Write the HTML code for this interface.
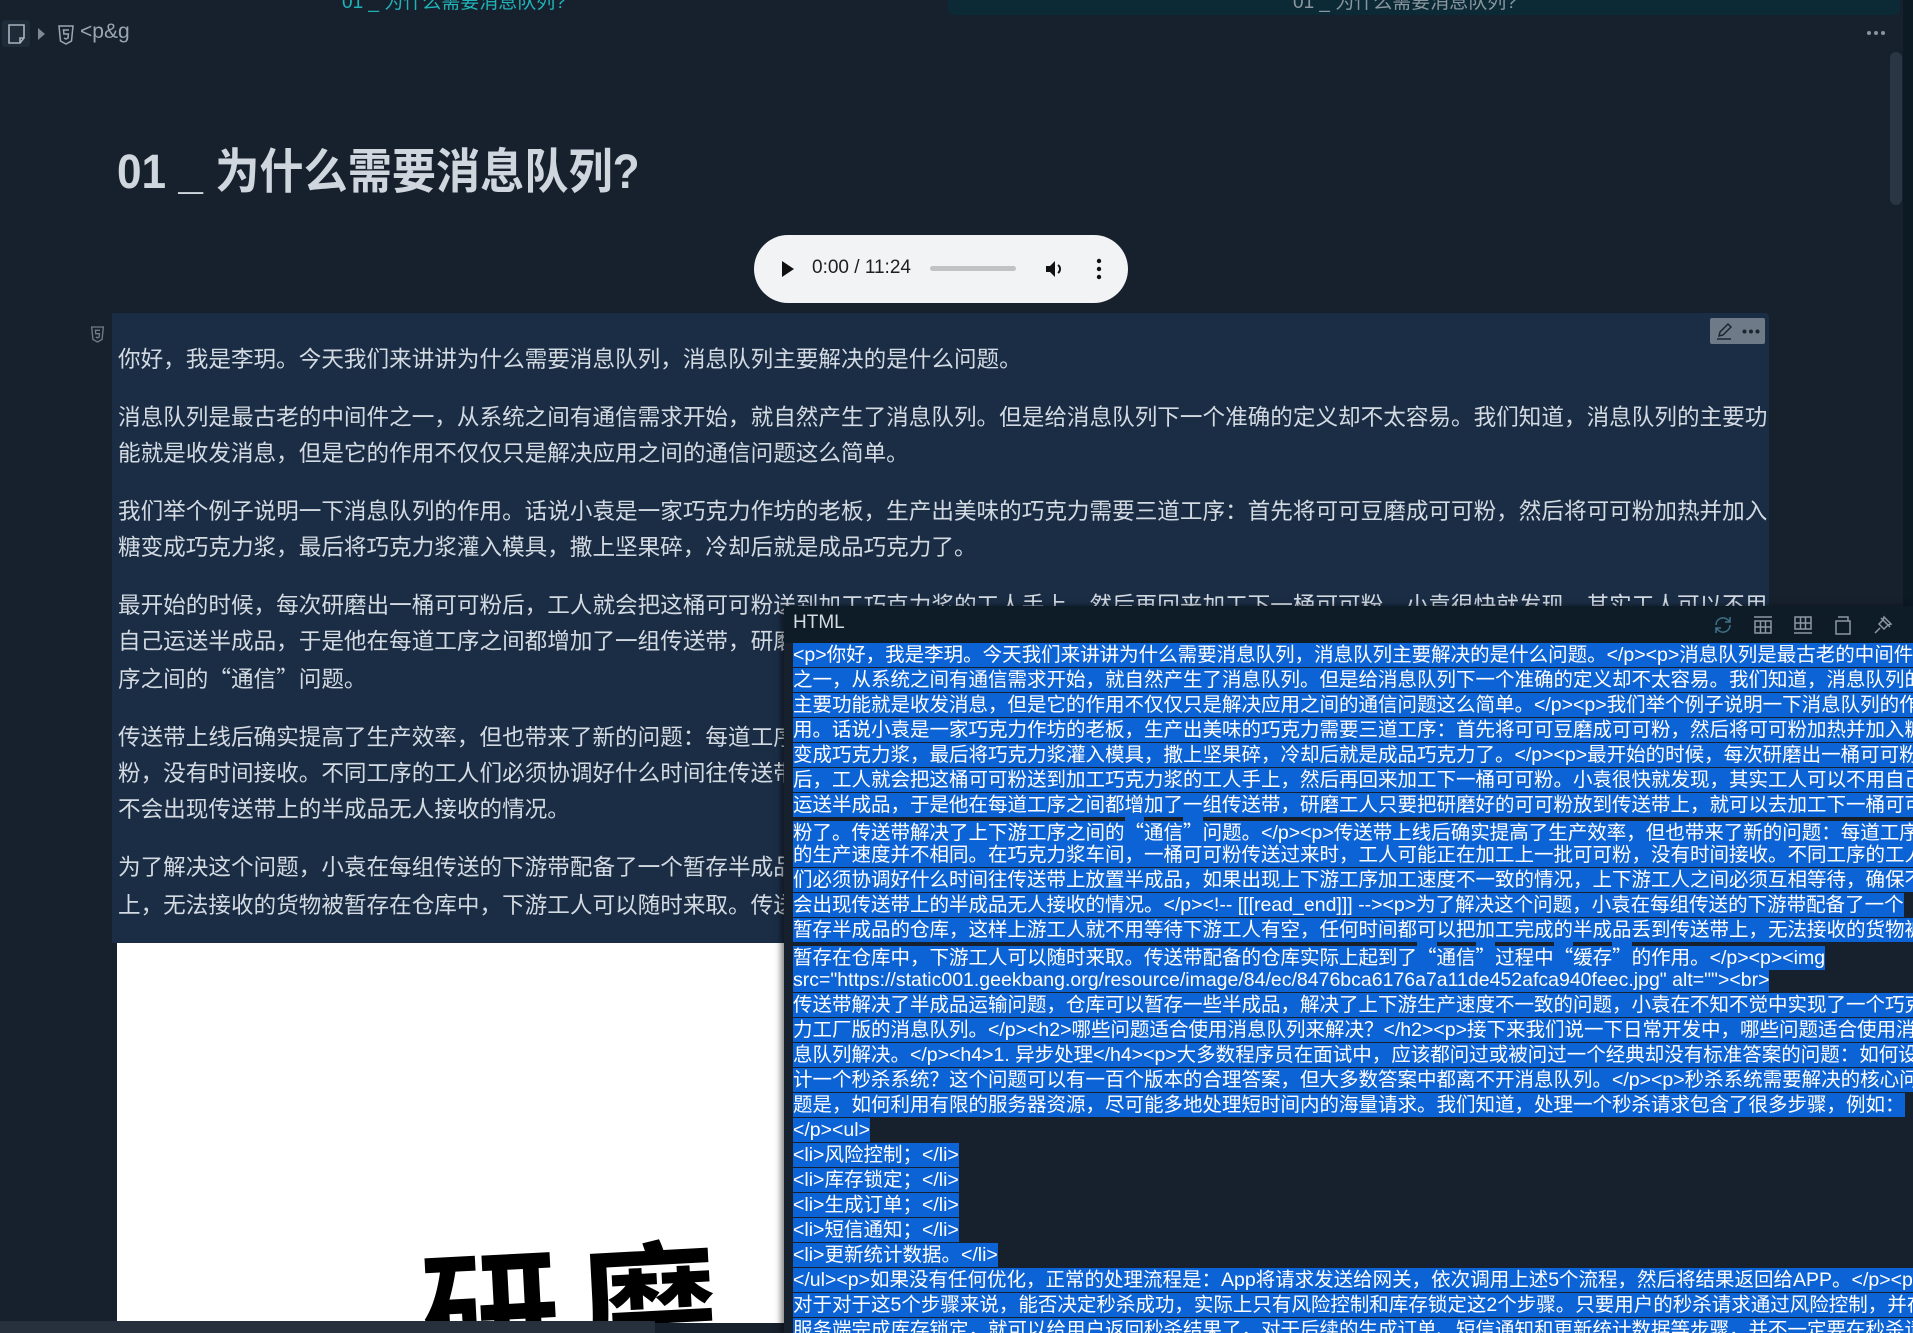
<!DOCTYPE html>
<html><head><meta charset="utf-8">
<style>
*{margin:0;padding:0;box-sizing:border-box}
html,body{width:1913px;height:1333px;overflow:hidden;background:#17212d;font-family:"Liberation Sans","Noto Sans CJK SC",sans-serif;position:relative}
.abs{position:absolute}
.q{font-family:"Noto Sans CJK SC",sans-serif}
.tab1{left:342px;top:-13px;color:#1fb3b8;font-size:19px;white-space:nowrap}
.tab2{left:948px;top:0;width:952px;height:15px;background:#0c2a35;border-radius:0 0 6px 6px;overflow:hidden}
.tab2 span{position:absolute;left:345px;top:-13px;color:#8a969f;font-size:19px;white-space:nowrap}
.rstrip{left:1903px;top:0;width:10px;height:1333px;background:#0c1a24}
.vscroll{left:1890px;top:52px;width:12px;height:153px;background:#2a3644;border-radius:6px}
.crumb{left:80px;top:20px;color:#9aa6b3;font-size:21px}
.title{left:117px;top:132px;font-size:48px;font-weight:bold;color:#cfd6de;white-space:nowrap;transform:scaleX(0.92);transform-origin:left center}
.audio{left:754px;top:235px;width:374px;height:68px;background:#f1f3f4;border-radius:34px}
.block{left:112px;top:313px;width:1657px;height:630px;background:#1b2d45;border-radius:0 4px 0 0;overflow:hidden}
.block p{font-size:22.6px;line-height:36px;color:#d3dae2;margin:0 0 22px 6px;white-space:nowrap}
.edit{left:1710px;top:318px;width:55px;height:26px;background:#6e7a88;border-radius:2px}
.img{left:117px;top:943px;width:667px;height:380px;background:#fff;overflow:hidden}
.img span{position:absolute;left:304px;top:258px;font-size:138px;font-weight:bold;color:#000;white-space:nowrap;letter-spacing:20px;transform:rotate(-3deg)}
.hscroll{left:0;top:1321px;width:655px;height:12px;background:#27313d}
.panel{left:784px;top:606px;width:1129px;height:727px;background:#17212d;box-shadow:-3px 0 6px rgba(0,0,0,.5);overflow:hidden}
.phead{position:absolute;left:0;top:0;width:100%;height:37px;background:#0d1c27}
.phead .t{position:absolute;left:9px;top:6px;color:#d5dbe1;font-size:19px}
.code{position:absolute;left:9px;top:37px;width:1125px;font-size:19.5px;line-height:25px;color:#fff;white-space:nowrap}
.code div{height:25px;overflow:visible}
.code span{background:#0c63d6;padding:1px 0 1px 0}
.code span .q{padding:0}
</style></head><body>
<div class="abs tab1">01 _ 为什么需要消息队列?</div>
<div class="abs tab2"><span>01 _ 为什么需要消息队列?</span></div>
<div class="abs rstrip"></div>
<div class="abs vscroll"></div>
<div class="abs" style="left:2px;top:20px;width:28px;height:27px;background:#1f2b38;border-radius:3px"></div>
<svg class="abs" style="left:6px;top:23px" width="22" height="22" viewBox="0 0 22 22"><path d="M3 2h15v13l-4 5H3z M14 20v-5h4" fill="none" stroke="#aab3bd" stroke-width="1.6"/></svg>
<svg class="abs" style="left:37px;top:27px" width="10" height="14" viewBox="0 0 10 14"><path d="M1 1l7 6-7 6z" fill="#7d8893"/></svg>
<svg class="abs" style="left:57px;top:25px" width="18" height="20" viewBox="0 0 18 20"><path d="M2 1h14l-1.5 15L9 19l-5.5-3z" fill="none" stroke="#9aa6b3" stroke-width="1.5"/><path d="M12 5H6.5l.4 4h4.5l-.4 4L9 14l-2-1" fill="none" stroke="#9aa6b3" stroke-width="1.5"/></svg>
<div class="abs crumb">&lt;p&amp;g</div>
<svg class="abs" style="left:1866px;top:29px" width="20" height="8"><circle cx="3" cy="4" r="2" fill="#8a949e"/><circle cx="10" cy="4" r="2" fill="#8a949e"/><circle cx="17" cy="4" r="2" fill="#8a949e"/></svg>

<div class="abs title">01 _ 为什么需要消息队列?</div>

<div class="abs audio">
<svg class="abs" style="left:27px;top:25px" width="14" height="18"><path d="M1 1l12 8-12 8z" fill="#111"/></svg>
<div class="abs" style="left:58px;top:22px;font-size:19px;color:#1f1f1f;white-space:nowrap">0:00 / 11:24</div>
<div class="abs" style="left:176px;top:31px;width:86px;height:5px;background:#c2c2c2;border-radius:3px"></div>
<svg class="abs" style="left:290px;top:23px" width="22" height="22" viewBox="0 0 22 22"><path d="M2 8h4l5-5v16l-5-5H2z" fill="#111"/><path d="M14 7a5 5 0 0 1 0 8" fill="none" stroke="#111" stroke-width="2"/></svg>
<svg class="abs" style="left:342px;top:23px" width="6" height="22"><circle cx="3" cy="3" r="2.2" fill="#111"/><circle cx="3" cy="11" r="2.2" fill="#111"/><circle cx="3" cy="19" r="2.2" fill="#111"/></svg>
</div>

<svg class="abs" style="left:90px;top:326px" width="15" height="17" viewBox="0 0 18 20"><path d="M2 1h14l-1.5 15L9 19l-5.5-3z" fill="none" stroke="#6f7c89" stroke-width="1.6"/><path d="M12 5H6.5l.4 4h4.5l-.4 4L9 14l-2-1" fill="none" stroke="#6f7c89" stroke-width="1.6"/></svg>

<div class="abs block">
<div style="height:29px"></div>
<p>你好，我是李玥。今天我们来讲讲为什么需要消息队列，消息队列主要解决的是什么问题。</p>
<p>消息队列是最古老的中间件之一，从系统之间有通信需求开始，就自然产生了消息队列。但是给消息队列下一个准确的定义却不太容易。我们知道，消息队列的主要功<br>能就是收发消息，但是它的作用不仅仅只是解决应用之间的通信问题这么简单。</p>
<p>我们举个例子说明一下消息队列的作用。话说小袁是一家巧克力作坊的老板，生产出美味的巧克力需要三道工序：首先将可可豆磨成可可粉，然后将可可粉加热并加入<br>糖变成巧克力浆，最后将巧克力浆灌入模具，撒上坚果碎，冷却后就是成品巧克力了。</p>
<p>最开始的时候，每次研磨出一桶可可粉后，工人就会把这桶可可粉送到加工巧克力浆的工人手上，然后再回来加工下一桶可可粉。小袁很快就发现，其实工人可以不用<br>自己运送半成品，于是他在每道工序之间都增加了一组传送带，研磨工人只要把研磨好的可可粉放到传送带上，就可以去加工下一桶可可粉了。传送带解决了上下游工<br>序之间的<span class="q">“</span>通信<span class="q">”</span>问题。</p>
<p>传送带上线后确实提高了生产效率，但也带来了新的问题：每道工序的生产速度并不相同。在巧克力浆车间，一桶可可粉传送过来时，工人可能正在加工上一批可可<br>粉，没有时间接收。不同工序的工人们必须协调好什么时间往传送带上放置半成品，如果出现上下游工序加工速度不一致的情况，上下游工人之间必须互相等待，确保<br>不会出现传送带上的半成品无人接收的情况。</p>
<p>为了解决这个问题，小袁在每组传送的下游带配备了一个暂存半成品的仓库，这样上游工人就不用等待下游工人有空，任何时间都可以把加工完成的半成品丢到传送带<br>上，无法接收的货物被暂存在仓库中，下游工人可以随时来取。传送带配备的仓库实际上起到了<span class="q">“</span>通信<span class="q">”</span>过程中<span class="q">“</span>缓存<span class="q">”</span>的作用。</p>
</div>
<div class="abs edit">
<svg class="abs" style="left:5px;top:3px" width="20" height="20" viewBox="0 0 20 20"><path d="M4 15l1-4 8-8 3 3-8 8z M2 18h14" fill="none" stroke="#1d2630" stroke-width="1.5"/></svg>
<svg class="abs" style="left:32px;top:11px" width="18" height="5"><circle cx="2.5" cy="2.5" r="2" fill="#1d2630"/><circle cx="9" cy="2.5" r="2" fill="#1d2630"/><circle cx="15.5" cy="2.5" r="2" fill="#1d2630"/></svg>
</div>

<div class="abs img"><span>研磨</span></div>
<div class="abs hscroll"></div>

<div class="abs panel">
<div class="phead"><div class="t">HTML</div>
<svg class="abs" style="left:928px;top:8px" width="22" height="22" viewBox="0 0 22 22"><path d="M4 11a7 7 0 0 1 12-5l2 2 M18 11a7 7 0 0 1-12 5l-2-2 M18 3v5h-5 M4 19v-5h5" fill="none" stroke="#3f6f85" stroke-width="1.6"/></svg>
<svg class="abs" style="left:968px;top:8px" width="22" height="22" viewBox="0 0 22 22"><path d="M2 3h18 M3 7h16v12H3z M3 13h16 M8.5 7v12 M13.5 7v12" fill="none" stroke="#8d98a3" stroke-width="1.5"/></svg>
<svg class="abs" style="left:1008px;top:8px" width="22" height="22" viewBox="0 0 22 22"><path d="M3 3h16v12H3z M3 9h16 M8.5 3v12 M13.5 3v12 M2 19h18" fill="none" stroke="#8d98a3" stroke-width="1.5"/></svg>
<svg class="abs" style="left:1048px;top:8px" width="22" height="22" viewBox="0 0 22 22"><path d="M4 7h14v13H4z M6 3h10v4" fill="none" stroke="#8d98a3" stroke-width="1.5"/></svg>
<svg class="abs" style="left:1088px;top:8px" width="22" height="22" viewBox="0 0 22 22"><path d="M9 4l9 9 M12 3l7 7-3 1-4 4-5-5 4-4z M8 14l-5 5" fill="none" stroke="#8d98a3" stroke-width="1.5"/></svg>
</div>
<div class="code">
<div><span>&lt;p&gt;你好，我是李玥。今天我们来讲讲为什么需要消息队列，消息队列主要解决的是什么问题。&lt;/p&gt;&lt;p&gt;消息队列是最古老的中间件</span></div>
<div><span>之一，从系统之间有通信需求开始，就自然产生了消息队列。但是给消息队列下一个准确的定义却不太容易。我们知道，消息队列的</span></div>
<div><span>主要功能就是收发消息，但是它的作用不仅仅只是解决应用之间的通信问题这么简单。&lt;/p&gt;&lt;p&gt;我们举个例子说明一下消息队列的作</span></div>
<div><span>用。话说小袁是一家巧克力作坊的老板，生产出美味的巧克力需要三道工序：首先将可可豆磨成可可粉，然后将可可粉加热并加入糖</span></div>
<div><span>变成巧克力浆，最后将巧克力浆灌入模具，撒上坚果碎，冷却后就是成品巧克力了。&lt;/p&gt;&lt;p&gt;最开始的时候，每次研磨出一桶可可粉</span></div>
<div><span>后，工人就会把这桶可可粉送到加工巧克力浆的工人手上，然后再回来加工下一桶可可粉。小袁很快就发现，其实工人可以不用自己</span></div>
<div><span>运送半成品，于是他在每道工序之间都增加了一组传送带，研磨工人只要把研磨好的可可粉放到传送带上，就可以去加工下一桶可可</span></div>
<div><span>粉了。传送带解决了上下游工序之间的<span class="q">“</span>通信<span class="q">”</span>问题。&lt;/p&gt;&lt;p&gt;传送带上线后确实提高了生产效率，但也带来了新的问题：每道工序</span></div>
<div><span>的生产速度并不相同。在巧克力浆车间，一桶可可粉传送过来时，工人可能正在加工上一批可可粉，没有时间接收。不同工序的工人</span></div>
<div><span>们必须协调好什么时间往传送带上放置半成品，如果出现上下游工序加工速度不一致的情况，上下游工人之间必须互相等待，确保不</span></div>
<div><span>会出现传送带上的半成品无人接收的情况。&lt;/p&gt;&lt;!-- [[[read_end]]] --&gt;&lt;p&gt;为了解决这个问题，小袁在每组传送的下游带配备了一个</span></div>
<div><span>暂存半成品的仓库，这样上游工人就不用等待下游工人有空，任何时间都可以把加工完成的半成品丢到传送带上，无法接收的货物被</span></div>
<div><span>暂存在仓库中，下游工人可以随时来取。传送带配备的仓库实际上起到了<span class="q">“</span>通信<span class="q">”</span>过程中<span class="q">“</span>缓存<span class="q">”</span>的作用。&lt;/p&gt;&lt;p&gt;&lt;img </span></div>
<div><span>src="https://static001.geekbang.org/resource/image/84/ec/8476bca6176a7a11de452afca940feec.jpg" alt=""&gt;&lt;br&gt;</span></div>
<div><span>传送带解决了半成品运输问题，仓库可以暂存一些半成品，解决了上下游生产速度不一致的问题，小袁在不知不觉中实现了一个巧克</span></div>
<div><span>力工厂版的消息队列。&lt;/p&gt;&lt;h2&gt;哪些问题适合使用消息队列来解决？&lt;/h2&gt;&lt;p&gt;接下来我们说一下日常开发中，哪些问题适合使用消</span></div>
<div><span>息队列解决。&lt;/p&gt;&lt;h4&gt;1. 异步处理&lt;/h4&gt;&lt;p&gt;大多数程序员在面试中，应该都问过或被问过一个经典却没有标准答案的问题：如何设</span></div>
<div><span>计一个秒杀系统？这个问题可以有一百个版本的合理答案，但大多数答案中都离不开消息队列。&lt;/p&gt;&lt;p&gt;秒杀系统需要解决的核心问</span></div>
<div><span>题是，如何利用有限的服务器资源，尽可能多地处理短时间内的海量请求。我们知道，处理一个秒杀请求包含了很多步骤，例如：</span></div>
<div><span>&lt;/p&gt;&lt;ul&gt;</span></div>
<div><span>&lt;li&gt;风险控制；&lt;/li&gt;</span></div>
<div><span>&lt;li&gt;库存锁定；&lt;/li&gt;</span></div>
<div><span>&lt;li&gt;生成订单；&lt;/li&gt;</span></div>
<div><span>&lt;li&gt;短信通知；&lt;/li&gt;</span></div>
<div><span>&lt;li&gt;更新统计数据。&lt;/li&gt;</span></div>
<div><span>&lt;/ul&gt;&lt;p&gt;如果没有任何优化，正常的处理流程是：App将请求发送给网关，依次调用上述5个流程，然后将结果返回给APP。&lt;/p&gt;&lt;p&gt;</span></div>
<div><span>对于对于这5个步骤来说，能否决定秒杀成功，实际上只有风险控制和库存锁定这2个步骤。只要用户的秒杀请求通过风险控制，并在</span></div>
<div><span>服务端完成库存锁定，就可以给用户返回秒杀结果了，对于后续的生成订单、短信通知和更新统计数据等步骤，并不一定要在秒杀请</span></div>
</div>
</div>
</body></html>
